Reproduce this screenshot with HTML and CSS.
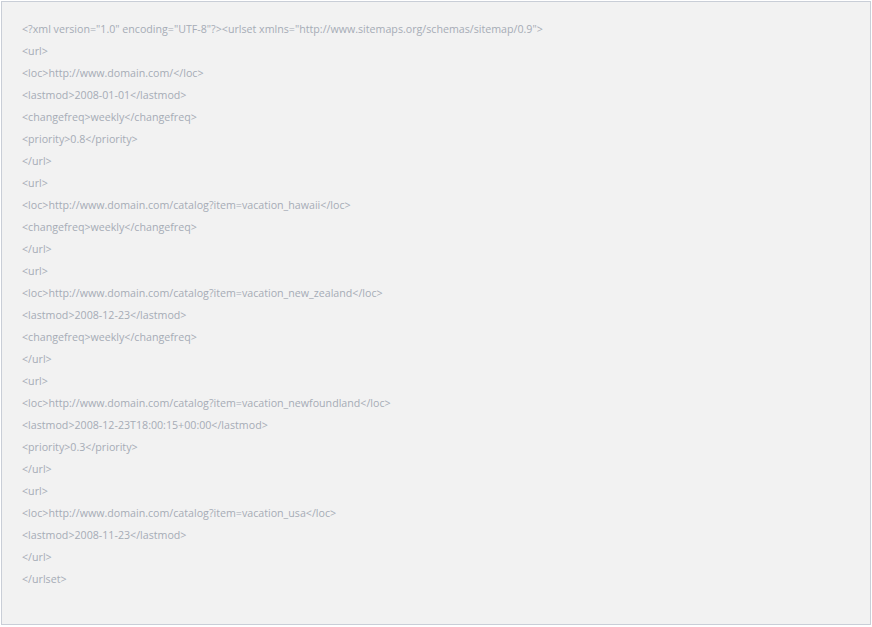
FILE: index.html
```html
<!DOCTYPE html>
<html>
<head>
<meta charset="utf-8">
<link rel="stylesheet" href="styles.css">
</head>
<body>
<div class="code">
<p class="line">&lt;?xml version="1.0" encoding="UTF-8"?&gt;&lt;urlset xmlns="http://www.sitemaps.org/schemas/sitemap/0.9"&gt;</p>
<p class="line">&lt;url&gt;</p>
<p class="line">&lt;loc&gt;http://www.domain.com/&lt;/loc&gt;</p>
<p class="line">&lt;lastmod&gt;2008-01-01&lt;/lastmod&gt;</p>
<p class="line">&lt;changefreq&gt;weekly&lt;/changefreq&gt;</p>
<p class="line">&lt;priority&gt;0.8&lt;/priority&gt;</p>
<p class="line">&lt;/url&gt;</p>
<p class="line">&lt;url&gt;</p>
<p class="line">&lt;loc&gt;http://www.domain.com/catalog?item=vacation_hawaii&lt;/loc&gt;</p>
<p class="line">&lt;changefreq&gt;weekly&lt;/changefreq&gt;</p>
<p class="line">&lt;/url&gt;</p>
<p class="line">&lt;url&gt;</p>
<p class="line">&lt;loc&gt;http://www.domain.com/catalog?item=vacation_new_zealand&lt;/loc&gt;</p>
<p class="line">&lt;lastmod&gt;2008-12-23&lt;/lastmod&gt;</p>
<p class="line">&lt;changefreq&gt;weekly&lt;/changefreq&gt;</p>
<p class="line">&lt;/url&gt;</p>
<p class="line">&lt;url&gt;</p>
<p class="line">&lt;loc&gt;http://www.domain.com/catalog?item=vacation_newfoundland&lt;/loc&gt;</p>
<p class="line">&lt;lastmod&gt;2008-12-23T18:00:15+00:00&lt;/lastmod&gt;</p>
<p class="line">&lt;priority&gt;0.3&lt;/priority&gt;</p>
<p class="line">&lt;/url&gt;</p>
<p class="line">&lt;url&gt;</p>
<p class="line">&lt;loc&gt;http://www.domain.com/catalog?item=vacation_usa&lt;/loc&gt;</p>
<p class="line">&lt;lastmod&gt;2008-11-23&lt;/lastmod&gt;</p>
<p class="line">&lt;/url&gt;</p>
<p class="line">&lt;/urlset&gt;</p>
</div>
</body>
</html>
```
FILE: styles.css
```css
html, body {
  margin: 0;
  padding: 0;
  background: #ffffff;
}
body {
  padding: 1px 1px 2px 1px;
}
.code {
  box-sizing: border-box;
  width: 870px;
  height: 624px;
  border: 1px solid #c9ced7;
  background: #f2f2f2;
  padding: 16px 20px;
  font-family: "Open Sans", sans-serif;
  font-size: 10.667px;
  line-height: 22px;
  color: #a6acb6;
}
.line {
  margin: 0;
  white-space: nowrap;
}
```
